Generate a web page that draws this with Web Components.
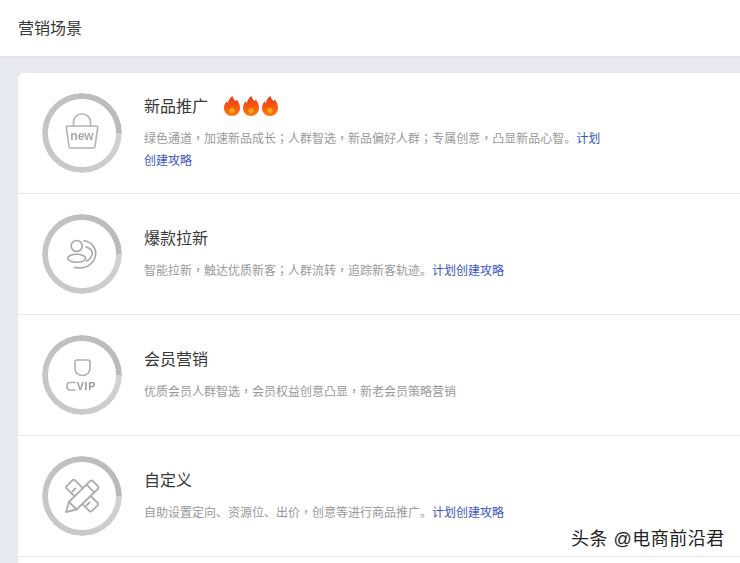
<!DOCTYPE html>
<html lang="zh-CN">
<head>
<meta charset="utf-8">
<title>营销场景</title>
<style>
  html, body { margin: 0; height: 563px; overflow: hidden; background: #e6e9f0; }
  scene-row i { font-style: normal; font-family: "Noto Sans CJK TC", sans-serif; }
</style>
</head>
<body>
<scene-page>
  <scene-row title="新品推广" flames>
    <svg slot="icon" viewBox="0 0 40 40" width="40" height="40" fill="none" stroke="#b4b4b4" stroke-width="1.6" stroke-linejoin="round" stroke-linecap="round">
      <path d="M5.500 13h29a1.200 1.200 0 0 1 1.200 1.400l-2.700 19a2 2 0 0 1-2 1.600H9a2 2 0 0 1-2-1.600l-2.700-19A1.200 1.200 0 0 1 5.500 13z"/>
      <path d="M11.500 13V9a8 8 0 0 1 8-8h1a8 8 0 0 1 8 8v4"/>
      <text x="20" y="27" text-anchor="middle" font-family="'Liberation Sans',sans-serif" font-weight="700" font-size="12" fill="#a8a8a8" stroke="none">new</text>
    </svg>
    绿色通道<i lang="zh-TW">，</i>加速新品成长<i lang="zh-TW">；</i>人群智选<i lang="zh-TW">，</i>新品偏好人群<i lang="zh-TW">；</i>专属创意<i lang="zh-TW">，</i>凸显新品心智。<a>计划</a><a>创建攻略</a>
  </scene-row>
  <scene-row title="爆款拉新">
    <svg slot="icon" viewBox="0 0 40 40" width="40" height="40" fill="none" stroke="#a8a8a8" stroke-width="1.600" stroke-linecap="round">
      <circle cx="14.700" cy="12" r="5.500"/>
      <ellipse cx="14.700" cy="24.300" rx="9" ry="4"/>
      <path d="M22 6.700C29 7.500 33.700 13 33.700 19.300 33.700 27.500 26 34 18 34c-2 0-4-.2-5.700-.5"/>
      <path d="M24 12.700c3.800 1.500 6.300 3.500 6.300 6.300 0 3-2.200 6-5.600 8"/>
    </svg>
    智能拉新<i lang="zh-TW">，</i>触达优质新客<i lang="zh-TW">；</i>人群流转<i lang="zh-TW">，</i>追踪新客轨迹。<a>计划创建攻略</a>
  </scene-row>
  <scene-row title="会员营销">
    <svg slot="icon" viewBox="0 0 40 40" width="40" height="40" fill="none" stroke="#b0b0b0" stroke-width="1.600" stroke-linecap="round" stroke-linejoin="round">
      <path d="M15 5h11a2 2 0 0 1 2 2v6.500c0 4-3.300 7-7.500 7s-7.500-3-7.500-7V7a2 2 0 0 1 2-2z"/>
      <path d="M13 27.500H8a3 3 0 0 0-3 3v1.500a3 3 0 0 0 3 3h5"/>
      <text x="14.700" y="35" font-family="'Liberation Sans',sans-serif" font-weight="700" font-size="10.500" letter-spacing=".8" fill="#989898" stroke="none">VIP</text>
    </svg>
    优质会员人群智选<i lang="zh-TW">，</i>会员权益创意凸显<i lang="zh-TW">，</i>新老会员策略营销
  </scene-row>
  <scene-row title="自定义">
    <svg slot="icon" viewBox="0 0 40 40" width="40" height="40" fill="none" stroke="#adadad" stroke-width="1.800" stroke-linejoin="round" stroke-linecap="round">
      <path d="M4.600 10.100l6-6a1.600 1.600 0 0 1 2.200 0L35.700 27a1.600 1.600 0 0 1 0 2.200l-6 6a1.600 1.600 0 0 1-2.200 0L4.600 12.300a1.600 1.600 0 0 1 0-2.200z"/>
      <path d="M10.500 15.500l3-3M24.500 29.500l3-3"/>
      <path d="M28 5.200a2.200 2.200 0 0 1 3 0l4.800 4.800a2.200 2.200 0 0 1 0 3L14.500 33.500 4 36l2.800-10z" fill="#fff"/>
      <path d="M7 26l7.500 7.500M24.500 8.700l7 7"/>
    </svg>
    自助设置定向、资源位、出价<i lang="zh-TW">，</i>创意等进行商品推广。<a>计划创建攻略</a>
  </scene-row>
  <scene-row blank></scene-row>
</scene-page>
<script>
  class ScenePage extends HTMLElement {
    connectedCallback() {
      this.attachShadow({ mode: 'open' });
      this.shadowRoot.innerHTML = `
        <style>
          :host { display: block; font-family: "Liberation Sans", "Noto Sans CJK SC", sans-serif; }
          header {
            height: 57px;
            box-sizing: border-box;
            padding: 0 0 3px 18px;
            display: flex;
            align-items: center;
            background: #fff;
            border-bottom: 1px solid #dfe2e8;
            color: #383838;
            font-size: 16px;
          }
          main { padding: 16px 0 0 18px; }
          .card { background: #fff; border-radius: 6px 0 0 0; overflow: hidden; }
          .mark {
            position: absolute;
            left: 571px;
            top: 526px;
            color: #222;
            font-size: 18px;
            line-height: 26px;
            letter-spacing: .5px;
            white-space: nowrap;
            text-shadow: 0 0 2px #fff, 1px 1px 1px #fff;
          }
        </style>
        <header>营销场景</header>
        <main><div class="card"><slot></slot></div></main>
        <div class="mark">头条 @电商前沿君</div>
      `;
    }
  }

  const flame = `
    <svg viewBox="0 0 16 20" width="16" height="20">
      <defs><linearGradient id="fl" x1="0" y1="0" x2="0" y2="1">
        <stop offset="0" stop-color="#ee3418"/><stop offset="1" stop-color="#ff7a0a"/>
      </linearGradient></defs>
      <path fill="url(#fl)" d="M8.500 0c.4 2.600 1.800 3.800 3.200 5.200.4-.5.600-1 .7-1.700C14.800 5.800 16 8.800 16 12c0 4.500-3.500 8-8 8s-8-3.500-8-8c0-3 1.300-5.200 2.800-6.800.2 1 .5 1.600 1 2.100C4.400 4 6.200 1.500 8.500 0z"/>
      <circle cx="8" cy="14.500" r="2.600" fill="#ffa818"/>
    </svg>`;

  class SceneRow extends HTMLElement {
    connectedCallback() {
      this.attachShadow({ mode: 'open' });
      if (this.hasAttribute('blank')) {
        this.shadowRoot.innerHTML = '<style>:host { display: block; height: 6px; }</style>';
        return;
      }
      const flames = this.hasAttribute('flames')
        ? `<span class="flames">${flame}${flame}${flame}</span>` : '';
      this.shadowRoot.innerHTML = `
        <style>
          :host {
            display: flex;
            align-items: center;
            box-sizing: border-box;
            height: 121px;
            padding-left: 24px;
            gap: 22px;
            border-bottom: 1px solid #e4e6ea;
          }
          .ring {
            flex: none;
            width: 80px;
            height: 80px;
            position: relative;
            display: grid;
            place-items: center;
            filter: blur(.4px);
          }
          .ring::before {
            content: "";
            position: absolute;
            inset: 0;
            border-radius: 50%;
            background: conic-gradient(from 90deg, #d2d2d2, #cacaca 90deg, #c6c6c6 180deg, #bebebe 270deg, #b9b9b9 360deg);
            -webkit-mask: radial-gradient(closest-side, transparent 33.500px, #000 34.500px);
            mask: radial-gradient(closest-side, transparent 33.500px, #000 34.500px);
          }
          .body { min-width: 0; margin-top: -2px; }
          .title {
            display: flex;
            align-items: center;
            height: 24px;
            color: #383838;
            font-size: 16px;
          }
          .flames { display: flex; gap: 3px; margin-left: 16px; margin-top: 2px; }
          .desc {
            margin-top: 10px;
            width: 460px;
            color: #999;
            font-size: 12px;
            line-height: 22px;
          }
          ::slotted(a) { color: #3b55c4; }
        </style>
        <div class="ring"><slot name="icon"></slot></div>
        <div class="body">
          <div class="title">${this.getAttribute('title')}${flames}</div>
          <div class="desc"><slot></slot></div>
        </div>
      `;
    }
  }

  customElements.define('scene-page', ScenePage);
  customElements.define('scene-row', SceneRow);
</script>
</body>
</html>
